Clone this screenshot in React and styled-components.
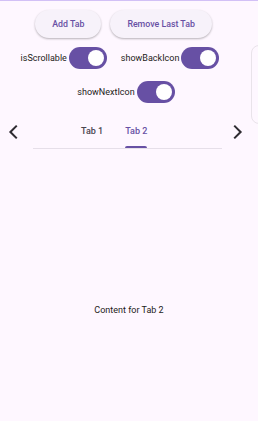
import React, { useState } from "react";
import styled, { createGlobalStyle } from "styled-components";

const GlobalStyle = createGlobalStyle`
  html, body {
    margin: 0;
    padding: 0;
    background: #fef7ff;
    font-family: Roboto, "Noto Sans", sans-serif;
  }
`;

const Page = styled.div`
  position: relative;
  width: 258px;
  height: 421px;
  overflow: hidden;
  background: #fef7ff;
  border-top: 1px solid #d2c0f6;
  box-sizing: border-box;
`;

const Controls = styled.div`
  display: flex;
  flex-direction: column;
  align-items: center;
  padding-top: 9px;
`;

const ButtonRow = styled.div`
  display: flex;
  gap: 9px;
  padding-right: 11px;
`;

const PillButton = styled.button`
  height: 28px;
  padding: 0 17px;
  border: none;
  border-radius: 14px;
  background: #f7f2fa;
  color: #6750a4;
  font-family: Roboto, sans-serif;
  font-weight: 500;
  font-size: 8.8px;
  box-shadow: 0 1px 2px rgba(0, 0, 0, 0.22), 0 1px 3px rgba(0, 0, 0, 0.08);
`;

const SwitchRow = styled.div`
  display: flex;
  align-items: center;
  gap: 14px;
  margin-top: ${(p) => p.$top}px;
  padding-right: ${(p) => p.$shift}px;
`;

const SwitchGroup = styled.label`
  display: flex;
  align-items: center;
  gap: 2px;
  font-size: 9px;
  color: #1d1b20;
`;

const Track = styled.span`
  position: relative;
  width: 38px;
  height: 22px;
  border-radius: 11px;
  background: #6750a4;
`;

const Thumb = styled.span`
  position: absolute;
  top: 3px;
  right: 3px;
  width: 16px;
  height: 16px;
  border-radius: 50%;
  background: #ffffff;
`;

const TabsLine = styled.div`
  display: flex;
  align-items: center;
  margin-top: 11px;
  height: 35px;
`;

const Chevron = styled.svg`
  width: 26px;
  height: 26px;
  flex: none;
  fill: none;
  stroke: #2e2b31;
  stroke-width: 1.9;
  stroke-linecap: square;
`;

const TabBar = styled.div`
  display: flex;
  align-self: stretch;
  width: 189px;
  margin: 0 3px 0 7px;
  padding-left: 37px;
  box-sizing: border-box;
  border-bottom: 1px solid #e6dfe9;
`;

const Tab = styled.div`
  position: relative;
  display: flex;
  align-items: center;
  padding: 0 11px;
  font-size: 9px;
  font-weight: 500;
  color: ${(p) => (p.$active ? "#6750a4" : "#49454f")};
`;

const Indicator = styled.span`
  position: absolute;
  left: 11px;
  right: 11px;
  bottom: 0;
  height: 2px;
  border-radius: 2px 2px 0 0;
  background: #6750a4;
`;

const Content = styled.div`
  text-align: center;
  margin-top: 156px;
  font-size: 9px;
  color: #1d1b20;
`;

const SideCard = styled.div`
  position: absolute;
  left: 251px;
  top: 44px;
  width: 40px;
  height: 77px;
  border: 1px solid #e9e3ea;
  border-radius: 8px;
  background: #fef7ff;
`;

const Switch = ({ label }) => (
  <SwitchGroup>
    {label}
    <Track>
      <Thumb />
    </Track>
  </SwitchGroup>
);

export default function App() {
  const [tabs] = useState(["Tab 1", "Tab 2"]);
  const active = 1;
  return (
    <Page>
      <GlobalStyle />
      <Controls>
        <ButtonRow>
          <PillButton>Add Tab</PillButton>
          <PillButton>Remove Last Tab</PillButton>
        </ButtonRow>
        <SwitchRow $top={9} $shift={18}>
          <Switch label="isScrollable" />
          <Switch label="showBackIcon" />
        </SwitchRow>
        <SwitchRow $top={12} $shift={6}>
          <Switch label="showNextIcon" />
        </SwitchRow>
      </Controls>
      <TabsLine>
        <Chevron viewBox="0 0 24 24">
          <path d="M14.8 6.8L9.6 12l5.2 5.2" />
        </Chevron>
        <TabBar>
          {tabs.map((t, i) => (
            <Tab key={t} $active={i === active}>
              {t}
              {i === active && <Indicator />}
            </Tab>
          ))}
        </TabBar>
        <Chevron viewBox="0 0 24 24">
          <path d="M9.2 6.8l5.2 5.2-5.2 5.2" />
        </Chevron>
      </TabsLine>
      <Content>Content for Tab {active + 1}</Content>
      <SideCard />
    </Page>
  );
}
